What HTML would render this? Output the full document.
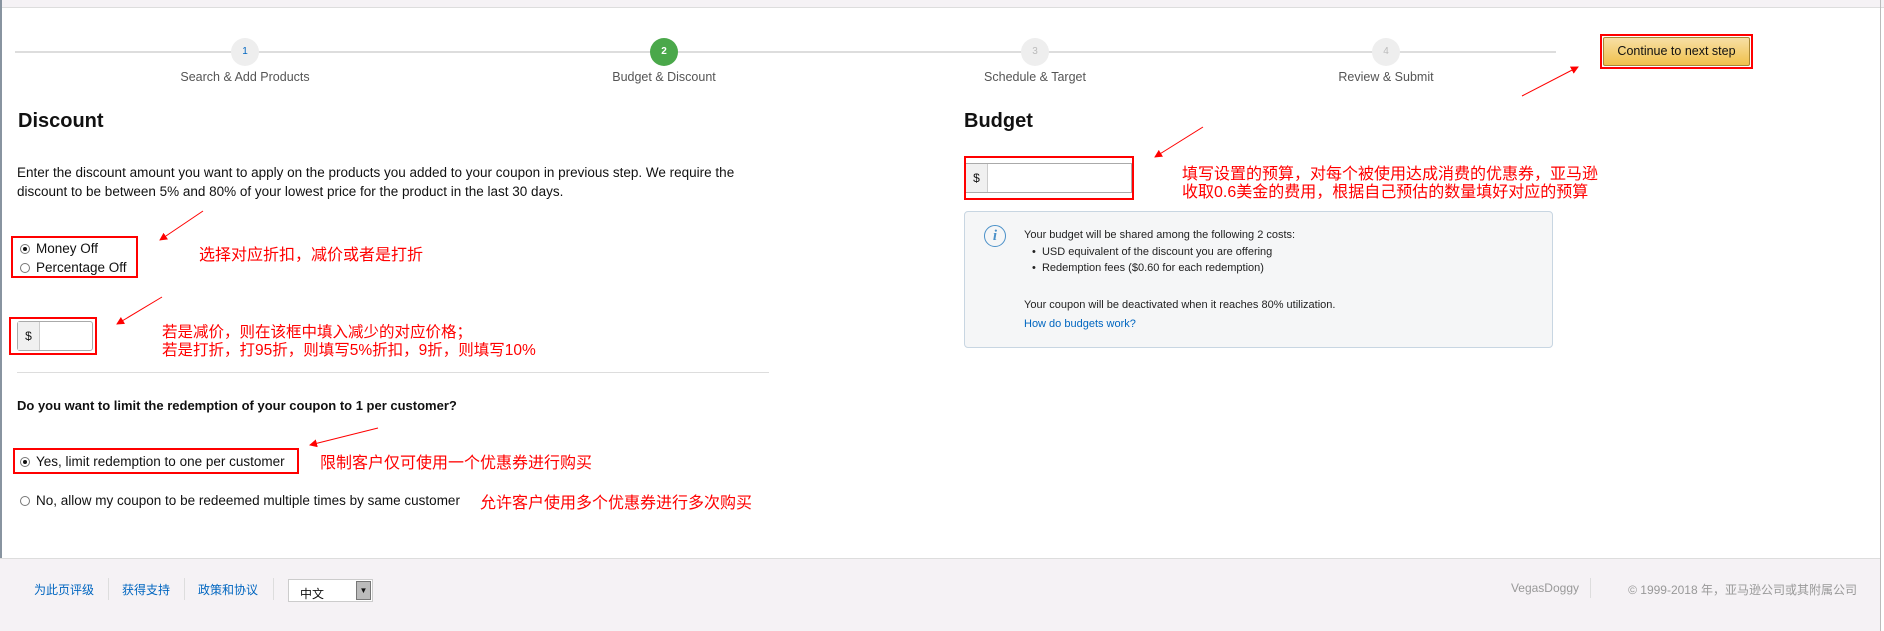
<!DOCTYPE html>
<html><head><meta charset="utf-8"><style>
*{margin:0;padding:0;box-sizing:border-box}
body{width:1884px;height:631px;position:relative;overflow:hidden;background:#fff;font-family:"Liberation Sans","Noto Sans CJK SC",sans-serif;color:#111}
.a{position:absolute;white-space:nowrap}
.cn{color:#f00;font-size:16px;font-family:"Liberation Sans","Noto Sans CJK SC",sans-serif;line-height:18px}
.rb{position:absolute;border:2px solid #f00}
.lbl{font-size:12.5px;color:#555;transform:translateX(-50%)}
.circ{position:absolute;width:28px;height:28px;border-radius:50%;background:#eee;color:#888;font-size:10px;text-align:center;line-height:28px;top:38px}
.radio{display:inline-block;width:10px;height:10px;border:1px solid #777;border-radius:50%;vertical-align:-1px;margin-right:6px;position:relative;background:#fff}
.radio.on:after{content:"";position:absolute;left:2px;top:2px;width:4px;height:4px;border-radius:50%;background:#111}
.t{font-size:13.5px}
.s{font-size:11px;color:#222}
.foot a{color:#0066c0;text-decoration:none;font-size:12px}
</style></head><body>
<div class="a" style="left:0;top:0;width:1884px;height:8px;background:#f5f2f5;border-bottom:1px solid #ddd"></div>
<div class="a" style="left:0;top:0;width:2px;height:631px;background:#8894a0"></div>
<div class="a" style="right:3px;top:0;width:1px;height:631px;background:#bbb"></div>

<div class="a" style="left:15px;top:51px;width:1541px;height:2px;background:#ddd"></div>
<div class="circ" style="left:231px;color:#0066c0">1</div>
<div class="circ" style="left:650px;background:#4aa84a;color:#fff;font-weight:bold">2</div>
<div class="circ" style="left:1021px;color:#bbb">3</div>
<div class="circ" style="left:1372px;color:#bbb">4</div>
<div class="a lbl" style="left:245px;top:70px">Search &amp; Add Products</div>
<div class="a lbl" style="left:664px;top:70px">Budget &amp; Discount</div>
<div class="a lbl" style="left:1035px;top:70px">Schedule &amp; Target</div>
<div class="a lbl" style="left:1386px;top:70px">Review &amp; Submit</div>

<div class="rb" style="left:1600px;top:34px;width:153px;height:35px"></div>
<div class="a" style="left:1603px;top:37px;width:147px;height:29px;background:linear-gradient(#f7dfa5,#f0c14b);border:1px solid #a88734;border-radius:2px;font-size:12.5px;text-align:center;line-height:27px">Continue to next step</div>

<svg class="a" style="left:0;top:0" width="1884" height="631">
<defs><marker id="m" markerWidth="8" markerHeight="8" refX="7" refY="4" orient="auto"><path d="M0,0 L8,4 L0,8z" fill="#f00"/></marker></defs>
<g stroke="#f00" stroke-width="1" marker-end="url(#m)">
<line x1="1522" y1="96" x2="1578" y2="67"/>
<line x1="203" y1="211" x2="160" y2="240"/>
<line x1="162" y1="297" x2="117" y2="324"/>
<line x1="378" y1="428" x2="310" y2="445"/>
<line x1="1203" y1="127" x2="1155" y2="157"/>
</g></svg>

<div class="a" style="left:18px;top:110px;font-size:20px;font-weight:bold">Discount</div>
<div class="a t" style="left:17px;top:163px;line-height:19px">Enter the discount amount you want to apply on the products you added to your coupon in previous step. We require the<br>discount to be between 5% and 80% of your lowest price for the product in the last 30 days.</div>

<div class="rb" style="left:11px;top:236px;width:127px;height:42px"></div>
<div class="a t" style="left:20px;top:241px"><span class="radio on"></span>Money Off</div>
<div class="a t" style="left:20px;top:260px"><span class="radio"></span>Percentage Off</div>
<div class="a cn" style="left:199px;top:247px">选择对应折扣，减价或者是打折</div>

<div class="rb" style="left:9px;top:317px;width:88px;height:38px"></div>
<div class="a" style="left:17px;top:321px;width:76px;height:30px;border:1px solid #aaa;border-radius:3px;background:#fff"></div>
<div class="a" style="left:18px;top:322px;width:22px;height:28px;background:#f0f0f0;border-right:1px solid #ccc;font-size:12px;text-align:center;line-height:28px">$</div>
<div class="a cn" style="left:162px;top:324px;font-size:15.5px">若是减价，则在该框中填入减少的对应价格；<br>若是打折，打95折，则填写5%折扣，9折，则填写10%</div>

<div class="a" style="left:17px;top:372px;width:752px;height:1px;background:#ddd"></div>
<div class="a" style="left:17px;top:398px;font-weight:bold;font-size:13px">Do you want to limit the redemption of your coupon to 1 per customer?</div>
<div class="rb" style="left:13px;top:448px;width:286px;height:26px"></div>
<div class="a t" style="left:20px;top:454px"><span class="radio on"></span>Yes, limit redemption to one per customer</div>
<div class="a cn" style="left:320px;top:455px">限制客户仅可使用一个优惠券进行购买</div>
<div class="a t" style="left:20px;top:493px"><span class="radio"></span>No, allow my coupon to be redeemed multiple times by same customer</div>
<div class="a cn" style="left:480px;top:495px">允许客户使用多个优惠券进行多次购买</div>

<div class="a" style="left:964px;top:110px;font-size:20px;font-weight:bold">Budget</div>
<div class="rb" style="left:964px;top:156px;width:170px;height:44px"></div>
<div class="a" style="left:966px;top:163px;width:166px;height:30px;border:1px solid #aaa;border-left:none;background:#fff"></div>
<div class="a" style="left:966px;top:164px;width:22px;height:28px;background:#f0f0f0;border-right:1px solid #ccc;font-size:12px;text-align:center;line-height:28px">$</div>
<div class="a cn" style="left:1182px;top:166px">填写设置的预算，对每个被使用达成消费的优惠券，亚马逊<br>收取0.6美金的费用，根据自己预估的数量填好对应的预算</div>

<div class="a" style="left:964px;top:211px;width:589px;height:137px;background:#f5f6f7;border:1px solid #c8d6e2;border-radius:4px"></div>
<div class="a" style="left:984px;top:225px;width:22px;height:22px;border:1.5px solid #4a90c8;border-radius:50%;color:#4a90c8;font-family:'Liberation Serif',serif;font-style:italic;font-weight:bold;font-size:15px;text-align:center;line-height:20px">i</div>
<div class="a s" style="left:1024px;top:229px">Your budget will be shared among the following 2 costs:</div>
<div class="a s" style="left:1032px;top:246px">•&nbsp; USD equivalent of the discount you are offering</div>
<div class="a s" style="left:1032px;top:262px">•&nbsp; Redemption fees ($0.60 for each redemption)</div>
<div class="a s" style="left:1024px;top:299px">Your coupon will be deactivated when it reaches 80% utilization.</div>
<div class="a s" style="left:1024px;top:318px;color:#0066c0">How do budgets work?</div>

<div class="a" style="left:0;top:558px;width:1880px;height:73px;background:#f5f2f5;border-top:1px solid #ddd"></div>
<div class="a foot" style="left:34px;top:581px"><a>为此页评级</a></div>
<div class="a" style="left:108px;top:578px;width:1px;height:22px;background:#ddd"></div>
<div class="a foot" style="left:122px;top:581px"><a>获得支持</a></div>
<div class="a" style="left:184px;top:578px;width:1px;height:22px;background:#ddd"></div>
<div class="a foot" style="left:198px;top:581px"><a>政策和协议</a></div>
<div class="a" style="left:273px;top:578px;width:1px;height:22px;background:#ddd"></div>
<div class="a" style="left:288px;top:579px;width:85px;height:23px;background:#fff;border:1px solid #ccc;font-size:12px;padding:5px 0 0 11px">中文</div>
<div class="a" style="left:356px;top:581px;width:15px;height:19px;background:#bbb;border:1px solid #777;font-size:8px;text-align:center;line-height:17px">▼</div>
<div class="a" style="right:305px;top:581px;font-size:12px;color:#999">VegasDoggy</div>
<div class="a" style="left:1590px;top:578px;width:1px;height:20px;background:#ddd"></div>
<div class="a" style="right:27px;top:581px;font-size:12px;color:#999">© 1999-2018 年，亚马逊公司或其附属公司</div>
</body></html>
